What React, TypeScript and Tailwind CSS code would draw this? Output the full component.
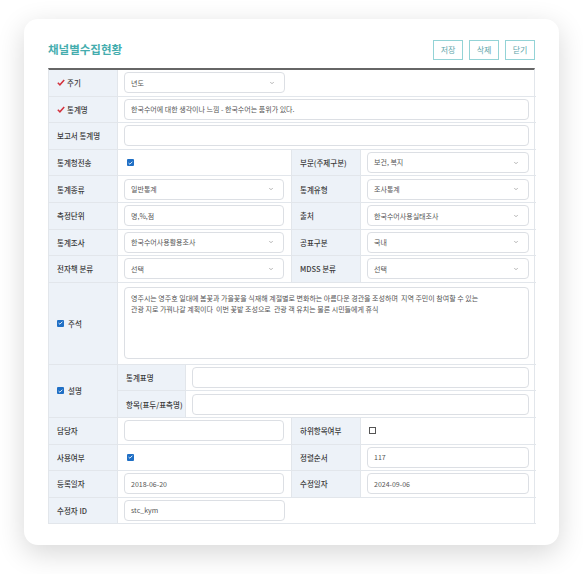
import type { ReactNode } from "react";
import { ChevronDown } from "lucide-react";

const FONT = "font-['Noto_Sans_CJK_KR','Noto_Sans',sans-serif]";

function RedCheck() {
  return (
    <svg width="8" height="7" viewBox="0 0 8 7" className="mr-[2px] shrink-0">
      <path d="M0.8 3.8 L2.9 5.8 L7.2 0.9" fill="none" stroke="#d3323d" strokeWidth="1.5" />
    </svg>
  );
}

function Box(props: { checked: boolean }) {
  if (!props.checked) {
    return <span className="block h-[7px] w-[7px] shrink-0 border border-[#555] bg-white" />;
  }
  return (
    <span className="flex h-[7px] w-[7px] shrink-0 items-center justify-center rounded-[1px] bg-[#1f6fc5]">
      <svg width="5" height="4" viewBox="0 0 5 4">
        <path d="M0.6 2.1 L1.9 3.2 L4.4 0.7" fill="none" stroke="#fff" strokeWidth="0.9" />
      </svg>
    </span>
  );
}

function Label(props: { children: ReactNode; required?: boolean; box?: boolean; className?: string }) {
  return (
    <div
      className={`flex items-center border-b border-r border-[#e2e6eb] bg-[#edf2f8] pl-[8px] text-[7.5px] font-medium text-[#3a3a3a] ${props.className ?? "h-[26.6px]"}`}
    >
      {props.required && <RedCheck />}
      {props.box && (
        <span className="mr-[4px]">
          <Box checked />
        </span>
      )}
      {props.children}
    </div>
  );
}

function Value(props: { children?: ReactNode; last?: boolean; className?: string }) {
  return (
    <div
      className={`flex h-[26.6px] items-center border-b border-[#e2e6eb] pl-[6px] pr-[7px] ${props.last ? "" : "border-r"} ${props.className ?? ""}`}
    >
      {props.children}
    </div>
  );
}

function Input(props: { value?: string; className?: string }) {
  return (
    <div
      className={`flex h-[21px] items-center rounded-[4px] border border-[#dcdfe4] bg-white px-[6px] text-[7px] text-[#555] ${props.className ?? "w-full"}`}
    >
      {props.value}
    </div>
  );
}

function Select(props: { value: string; className?: string }) {
  return (
    <div
      className={`flex h-[21px] items-center justify-between rounded-[4px] border border-[#dcdfe4] bg-white pl-[6px] pr-[9px] text-[7px] text-[#555] ${props.className ?? "w-full"}`}
    >
      <span>{props.value}</span>
      <ChevronDown size={6} strokeWidth={2.5} className="text-[#888]" />
    </div>
  );
}

export default function App() {
  return (
    <div className={`min-h-[574px] bg-white px-[24px] pb-[28px] pt-[19px] ${FONT}`}>
      <div className="rounded-[14px] bg-white px-[24px] pb-[21px] pt-[21px] shadow-[0_8px_28px_rgba(0,0,0,0.16)]">
        <div className="mb-[8px] flex h-[20px] items-center justify-between">
          <h1 className="text-[11.5px] font-bold text-[#45adae]">채널별수집현황</h1>
          <div className="flex gap-[6px]">
            {["저장", "삭제", "닫기"].map((label) => (
              <button
                key={label}
                className="flex h-[20px] w-[30px] items-center justify-center border border-[#93d3d6] bg-white text-[8px] text-[#5ea5aa]"
              >
                {label}
              </button>
            ))}
          </div>
        </div>

        <div className="grid grid-cols-[69px_174px_69px_175px] border-x border-t-2 border-x-[#e2e6eb] border-t-[#666]">
          <Label required>주기</Label>
          <Value last className="col-span-3">
            <Select value="년도" className="w-[161px]" />
          </Value>

          <Label required>통계명</Label>
          <Value last className="col-span-3">
            <Input value="한국수어에 대한 생각이나 느낌 - 한국수어는 품위가 있다." />
          </Value>

          <Label>보고서 통계명</Label>
          <Value last className="col-span-3">
            <Input />
          </Value>

          <Label>통계청전송</Label>
          <Value>
            <span className="pl-[3px]">
              <Box checked />
            </span>
          </Value>
          <Label>부문(주제구분)</Label>
          <Value last>
            <Select value="보건, 복지" />
          </Value>

          <Label>통계종류</Label>
          <Value>
            <Select value="일반통계" />
          </Value>
          <Label>통계유형</Label>
          <Value last>
            <Select value="조사통계" />
          </Value>

          <Label>측정단위</Label>
          <Value>
            <Input value="명,%,점" />
          </Value>
          <Label>출처</Label>
          <Value last>
            <Select value="한국수어사용실태조사" />
          </Value>

          <Label>통계조사</Label>
          <Value>
            <Select value="한국수어사용활용조사" />
          </Value>
          <Label>공표구분</Label>
          <Value last>
            <Select value="국내" />
          </Value>

          <Label>전자책 분류</Label>
          <Value>
            <Select value="선택" />
          </Value>
          <Label>MDSS 분류</Label>
          <Value last>
            <Select value="선택" />
          </Value>

          <Label box className="h-[82px]">
            주석
          </Label>
          <div className="col-span-3 flex h-[82px] items-center border-b border-[#e2e6eb] pl-[6px] pr-[7px]">
            <div className="h-[72px] w-full rounded-[4px] border border-[#dcdfe4] bg-white px-[6px] py-[5px] text-[7px] leading-[11px] text-[#555]">
              영주시는 영주호 일대에 봄꽃과 가을꽃을 식재해 계절별로 변화하는 아름다운 경관을 조성하며&nbsp; 지역 주민이 참여할 수 있는
              <br />
              관광 지로 가꿔나갈 계획이다&nbsp; 이번 꽃밭 조성으로&nbsp; 관광 객 유치는 물론 시민들에게 휴식
            </div>
          </div>

          <Label box className="h-[53.2px]">
            설명
          </Label>
          <div className="col-span-3 grid grid-cols-[68px_1fr]">
            <Label>통계표명</Label>
            <Value last>
              <Input />
            </Value>
            <Label>항목(표두/표측명)</Label>
            <Value last>
              <Input />
            </Value>
          </div>

          <Label>담당자</Label>
          <Value>
            <Input />
          </Value>
          <Label>하위항목여부</Label>
          <Value last>
            <span className="pl-[2px]">
              <Box checked={false} />
            </span>
          </Value>

          <Label>사용여부</Label>
          <Value>
            <span className="pl-[3px]">
              <Box checked />
            </span>
          </Value>
          <Label>정렬순서</Label>
          <Value last>
            <Input value="117" />
          </Value>

          <Label>등록일자</Label>
          <Value>
            <Input value="2018-06-20" />
          </Value>
          <Label>수정일자</Label>
          <Value last>
            <Input value="2024-09-06" />
          </Value>

          <Label>수정자 ID</Label>
          <Value className="border-r-0">
            <Input value="stc_kym" />
          </Value>
          <Value last className="col-span-2" />
        </div>
      </div>
    </div>
  );
}
